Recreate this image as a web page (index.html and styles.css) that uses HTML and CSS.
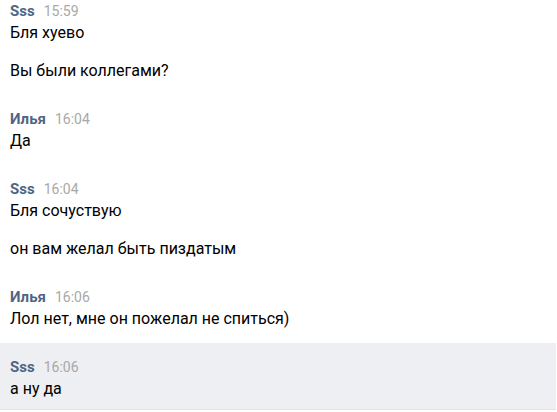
FILE: index.html
```html
<!DOCTYPE html>
<html lang="ru">
<head>
    <meta charset="UTF-8">
    <meta name="viewport" content="width=device-width, initial-scale=1.0">
    <title>Диалог</title>
    <link rel="stylesheet" href="styles.css">
</head>
<body>
    <div class="history">
        <div class="stack">
            <div class="stack-head"><span class="author">Sss</span><span class="time">15:59</span></div>
            <div class="msg">Бля хуево</div>
            <div class="msg">Вы были коллегами?</div>
        </div>
        <div class="stack">
            <div class="stack-head"><span class="author">Илья</span><span class="time">16:04</span></div>
            <div class="msg">Да</div>
        </div>
        <div class="stack">
            <div class="stack-head"><span class="author">Sss</span><span class="time">16:04</span></div>
            <div class="msg">Бля сочуствую</div>
            <div class="msg">он вам желал быть пиздатым</div>
        </div>
        <div class="stack">
            <div class="stack-head"><span class="author">Илья</span><span class="time">16:06</span></div>
            <div class="msg">Лол нет, мне он пожелал не спиться)</div>
        </div>
        <div class="stack unread">
            <div class="stack-head"><span class="author">Sss</span><span class="time">16:06</span></div>
            <div class="msg">а ну да</div>
        </div>
    </div>
</body>
</html>
```

FILE: styles.css
```css
/* General */
body {
    margin: 0;
    background: #fff;
    font-family: Roboto, "Liberation Sans", Arial, sans-serif;
    font-size: 16px;
    line-height: 18px;
    color: #000;
}

/* Message history */
.history {
    margin-top: -13px;
    width: 556px;
}

.stack {
    padding: 15px 10px 15px 10px;
}

.stack-head {
    margin-bottom: 4px;
}

.author {
    font-size: 15px;
    font-weight: 700;
    color: #4e6583;
    margin-right: 9px;
}

.time {
    font-size: 14px;
    color: #a8a8a8;
}

.msg + .msg {
    margin-top: 20px;
}

/* Unread / selected */
.unread {
    background: #edeff2;
    padding-bottom: 11px;
    border-bottom: 1px solid #e1e3e6;
}
```
